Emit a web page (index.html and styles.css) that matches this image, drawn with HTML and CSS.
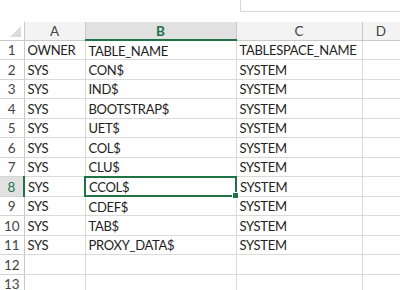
FILE: index.html
```html
<!DOCTYPE html>
<html>
<head>
<meta charset="utf-8">
<link rel="stylesheet" href="styles.css">
</head>
<body>
<div class="topbar"><div class="spacer"></div><div class="formula"></div></div>
<table class="sheet">
  <colgroup>
    <col class="c-rh"><col class="c-a"><col class="c-b"><col class="c-c"><col class="c-d">
  </colgroup>
  <thead>
    <tr>
      <th class="corner"><span class="tri"></span></th>
      <th class="colh">A</th>
      <th class="colh sel">B</th>
      <th class="colh">C</th>
      <th class="colh">D</th>
    </tr>
  </thead>
  <tbody>
    <tr><td class="rh">1</td><td>OWNER</td><td>TABLE_NAME</td><td>TABLESPACE_NAME</td><td></td></tr>
    <tr><td class="rh">2</td><td>SYS</td><td>CON$</td><td>SYSTEM</td><td></td></tr>
    <tr><td class="rh">3</td><td>SYS</td><td>IND$</td><td>SYSTEM</td><td></td></tr>
    <tr><td class="rh">4</td><td>SYS</td><td>BOOTSTRAP$</td><td>SYSTEM</td><td></td></tr>
    <tr><td class="rh">5</td><td>SYS</td><td>UET$</td><td>SYSTEM</td><td></td></tr>
    <tr><td class="rh">6</td><td>SYS</td><td>COL$</td><td>SYSTEM</td><td></td></tr>
    <tr><td class="rh">7</td><td>SYS</td><td>CLU$</td><td>SYSTEM</td><td></td></tr>
    <tr><td class="rh selrow">8</td><td>SYS</td><td class="active">CCOL$<span class="handle"></span></td><td>SYSTEM</td><td></td></tr>
    <tr><td class="rh">9</td><td>SYS</td><td>CDEF$</td><td>SYSTEM</td><td></td></tr>
    <tr><td class="rh">10</td><td>SYS</td><td>TAB$</td><td>SYSTEM</td><td></td></tr>
    <tr><td class="rh">11</td><td>SYS</td><td>PROXY_DATA$</td><td>SYSTEM</td><td></td></tr>
    <tr><td class="rh">12</td><td></td><td></td><td></td><td></td></tr>
    <tr><td class="rh">13</td><td></td><td></td><td></td><td></td></tr>
  </tbody>
</table>
</body>
</html>
```
FILE: styles.css
```css
html, body {
  margin: 0;
  padding: 0;
  background: #ffffff;
  overflow: hidden;
}
body {
  width: 400px;
  height: 290px;
  font-family: "Lato", "Open Sans", sans-serif;
  color: #222222;
}
.topbar {
  display: flex;
  height: 22px;
}
.spacer {
  width: 240px;
  flex: none;
}
.formula {
  flex: 1;
  height: 11px;
  border-left: 1px solid #d6d6d6;
  border-bottom: 1px solid #d6d6d6;
}
.sheet {
  border-collapse: collapse;
  table-layout: fixed;
  width: 400px;
}
.c-rh { width: 24px; }
.c-a { width: 61px; }
.c-b { width: 151px; }
.c-c { width: 126px; }
.c-d { width: 38px; }
th, td {
  padding: 0;
  height: 19.5px;
  box-sizing: border-box;
  border: 1px solid #dadada;
  font-size: 13px;
  letter-spacing: -0.3px;
  white-space: nowrap;
  overflow: visible;
}
td {
  padding: 1px 0 0 3px;
  text-align: left;
  font-weight: normal;
}
th {
  height: 18px;
  background: #f3f3f3;
  border-color: #c9c9c9;
  border-top: none;
  font-weight: normal;
  color: #444444;
  text-align: center;
  letter-spacing: 0;
  font-size: 13.5px;
}
th.sel {
  background: #e1e1e1;
  color: #217346;
  font-weight: bold;
  border-bottom: 2px solid #217346;
}
th.corner {
  position: relative;
  background: #ffffff;
  border-left: none;
}
.tri {
  position: absolute;
  right: 3px;
  bottom: 3px;
  width: 0;
  height: 0;
  border-left: 11px solid transparent;
  border-bottom: 11px solid #dcdcdc;
}
td.rh {
  padding: 1px 0 0 0;
  text-align: center;
  color: #444444;
  background: #ffffff;
  border-left: none;
  border-color: #d4d4d4;
  border-right-color: #c9c9c9;
  letter-spacing: 0;
  font-size: 13.5px;
}
td.selrow {
  background: #e1e1e1;
  color: #217346;
  border-right: 2px solid #217346;
}
td.active {
  position: relative;
  border: 2px solid #217346;
}
.handle {
  position: absolute;
  right: -4px;
  bottom: -4px;
  width: 5px;
  height: 5px;
  background: #217346;
  border: 1px solid #ffffff;
}
```
